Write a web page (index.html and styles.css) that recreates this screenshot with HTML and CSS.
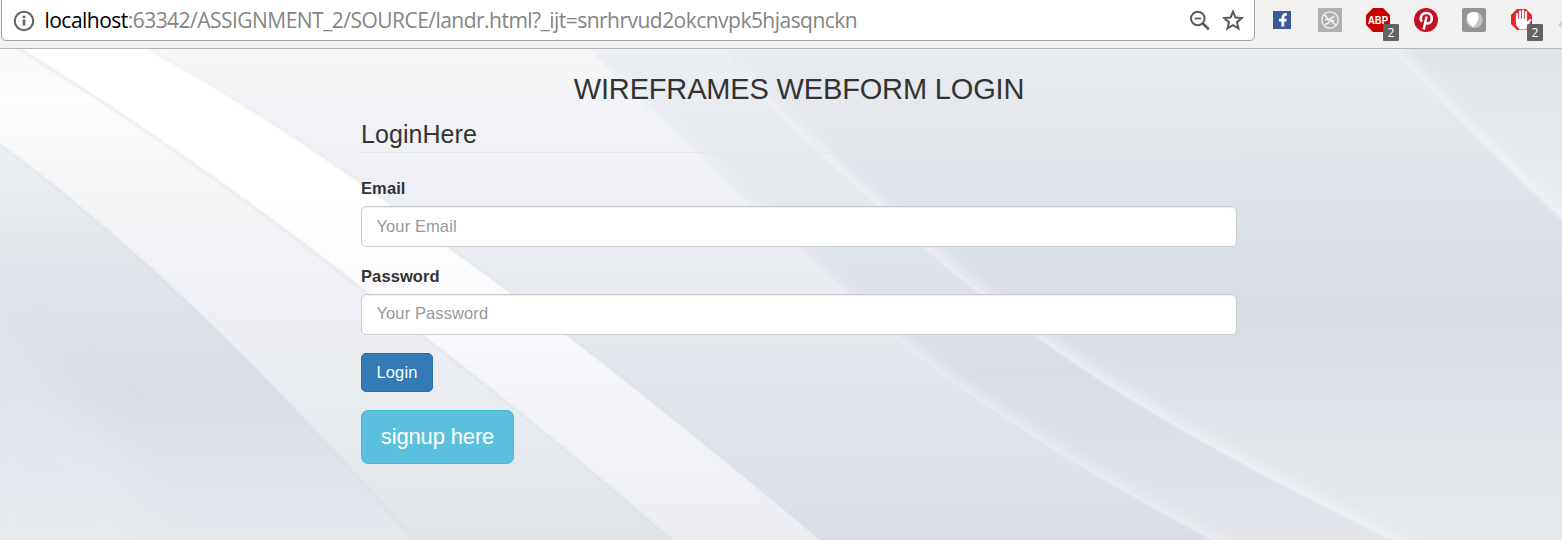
FILE: index.html
```html
<!DOCTYPE html>
<html lang="en">
<head>
<meta charset="utf-8">
<title>Wireframes Webform Login</title>
<link rel="stylesheet" href="styles.css">
</head>
<body>
<header class="toolbar">
  <div class="address">
    <svg class="info" width="22" height="22" viewBox="0 0 22 22"><circle cx="11" cy="11" r="9.2" fill="none" stroke="#5f5f5f" stroke-width="2"/><path d="M11 9.600v6M11 5.800v2.200" stroke="#5f5f5f" stroke-width="2.600"/></svg>
    <span class="url"><span class="host">localhost</span>:63342/ASSIGNMENT_2/SOURCE/landr.html?_ijt=snrhrvud2okcnvpk5hjasqnckn</span>
    <svg class="zoom" width="22" height="22" viewBox="0 0 22 22"><circle cx="8.8" cy="8.5" r="6.8" fill="none" stroke="#5a5a5a" stroke-width="2"/><path d="M13.6 13.3l6.2 6" stroke="#5a5a5a" stroke-width="2.6"/><path d="M5.5 8.5h6.6" stroke="#5a5a5a" stroke-width="1.8"/></svg>
    <svg class="star" width="22" height="22" viewBox="0 0 22 22"><path d="M11 2.600l2.500 5.900 6.400.5-4.900 4.200 1.500 6.200-5.500-3.300-5.500 3.300L7 13.200 2.100 9l6.400-.5z" fill="none" stroke="#5a5a5a" stroke-width="2"/></svg>
  </div>
  <div class="extensions">
    <div class="ext"><svg width="24" height="24" viewBox="0 0 24 24"><path d="M3 3h18v18H3z" fill="#3b5998"/><path d="M12.800 18.500v-8.500q0-4 4-3.600M9 12.200h7.500" fill="none" stroke="#fff" stroke-width="2.800"/></svg></div>
    <div class="ext"><svg width="24" height="24" viewBox="0 0 24 24"><path d="M0 0h24v24H0z" fill="#b0b0b0"/><circle cx="12" cy="12" r="8.200" fill="none" stroke="#f1f1f1" stroke-width="1.300"/><path d="M6.500 7l4 4M13 13l5 4M7 16.500q4-1 5-4.500t4.500-3M7 11.500q5-.5 9 1.500" fill="none" stroke="#f4f4f4" stroke-width="1.500"/></svg></div>
    <div class="ext"><svg width="24" height="24" viewBox="0 0 24 24"><path d="M7 0h10l7 7v10l-7 7H7l-7-7V7z" fill="#c70000"/><text x="12" y="15.700" text-anchor="middle" textLength="20" lengthAdjust="spacingAndGlyphs" class="abp">ABP</text></svg><span class="badge">2</span></div>
    <div class="ext"><svg width="24" height="24" viewBox="0 0 24 24"><circle cx="12" cy="12" r="12" fill="#c40f24"/><path d="M7.900 13.700C5.300 10 7.300 4.900 12.500 4.900c7 0 6.700 10.600 1.200 10.600-1.300 0-2.200-.7-2.400-1.400M12.600 8.500L9.700 21.500" fill="none" stroke="#fff" stroke-width="2.500"/></svg></div>
    <div class="ext"><svg width="24" height="24" viewBox="0 0 24 24"><rect width="24" height="24" rx="2" fill="#949494"/><circle cx="12.500" cy="12" r="8.200" fill="#c4c4c4"/><path d="M7 5q5-2 9 0 2 9-5 14Q5 15 5 9q0-3 2-4z" fill="#fff"/></svg></div>
    <div class="ext"><svg width="24" height="24" viewBox="0 0 24 24"><path d="M7 1h9l6 6v9l-6 6H7l-6-6V7z" fill="#e5252a"/><path d="M7 6v8M10 3.500v10M13 2.500v11M16 4v10" stroke="#fff" stroke-width="2.200" stroke-linecap="round"/><path d="M5.900 11h11.200v3l2.500-3 2 .6-4 7.400-1.900 2.500H9.500L6 17z" fill="#fff"/></svg><span class="badge">2</span></div>
    <div class="ext"><svg width="24" height="24" viewBox="0 0 24 24"><path d="M0 17l6-6v8q-4 1-6-2z" fill="#d4d4d4"/></svg></div>
  </div>
</header>
<main class="page">
  <svg class="backdrop" viewBox="0 49 1562 491" preserveAspectRatio="none" aria-hidden="true">
    <defs>
      <filter id="soft" x="-10%" y="-10%" width="120%" height="120%"><feGaussianBlur stdDeviation="6"/></filter>
      <filter id="wide" x="-40%" y="-40%" width="180%" height="180%"><feGaussianBlur stdDeviation="22"/></filter>
      <filter id="edge" x="-10%" y="-10%" width="120%" height="120%"><feGaussianBlur stdDeviation="0.8"/></filter>
      <linearGradient id="a" gradientUnits="userSpaceOnUse" x1="0" y1="49" x2="0" y2="540"><stop offset=".2" stop-color="#edf0f3"/><stop offset=".4" stop-color="#e2e6ea"/><stop offset=".52" stop-color="#dee2ea"/><stop offset=".7" stop-color="#d9dde6"/><stop offset=".86" stop-color="#dfe3ec"/><stop offset="1" stop-color="#e4e7eb"/></linearGradient>
      <linearGradient id="b" gradientUnits="userSpaceOnUse" x1="0" y1="49" x2="0" y2="540"><stop offset="0" stop-color="#f8f8f8"/><stop offset=".1" stop-color="#fdfdfd"/><stop offset=".31" stop-color="#f4f5f7"/><stop offset=".51" stop-color="#eff0f5"/><stop offset=".72" stop-color="#e8ebf0"/><stop offset="1" stop-color="#e0e3e7"/></linearGradient>
      <linearGradient id="c" gradientUnits="userSpaceOnUse" x1="0" y1="49" x2="0" y2="540"><stop offset=".3" stop-color="#fff"/><stop offset=".58" stop-color="#f9fafc"/><stop offset=".72" stop-color="#f3f4f7"/><stop offset=".88" stop-color="#eff1f5"/><stop offset="1" stop-color="#eaecf2"/></linearGradient>
      <linearGradient id="d" gradientUnits="userSpaceOnUse" x1="0" y1="49" x2="0" y2="540"><stop offset="0" stop-color="#f6f7f8"/><stop offset=".2" stop-color="#f0f1f5"/><stop offset=".32" stop-color="#edeff4"/><stop offset=".4" stop-color="#e9ecf0"/><stop offset=".58" stop-color="#e4e7eb"/><stop offset=".68" stop-color="#e1e4eb"/><stop offset=".88" stop-color="#dde1e9"/><stop offset="1" stop-color="#d9dde6"/></linearGradient>
      <linearGradient id="e" gradientUnits="userSpaceOnUse" x1="0" y1="49" x2="0" y2="540"><stop offset="0" stop-color="#ebeef3"/><stop offset=".2" stop-color="#e6e9ee"/><stop offset=".32" stop-color="#e3e6ea"/><stop offset=".43" stop-color="#dee2ea"/><stop offset=".66" stop-color="#d9dde6"/><stop offset=".82" stop-color="#dce0e9"/><stop offset="1" stop-color="#e2e4e9"/></linearGradient>
      <linearGradient id="f" gradientUnits="userSpaceOnUse" x1="0" y1="49" x2="0" y2="540"><stop offset="0" stop-color="#e8ebf0"/><stop offset=".2" stop-color="#e2e5e9"/><stop offset=".25" stop-color="#dfe4eb"/><stop offset=".45" stop-color="#dadfe7"/><stop offset=".53" stop-color="#d9dce5"/><stop offset=".76" stop-color="#dfe3ec"/><stop offset=".8" stop-color="#e1e5e9"/><stop offset="1" stop-color="#e5e8ec"/></linearGradient>
      <linearGradient id="g" gradientUnits="userSpaceOnUse" x1="0" y1="49" x2="0" y2="220"><stop offset="0" stop-color="#e0e3e7"/><stop offset=".6" stop-color="#e5e9ed"/><stop offset="1" stop-color="#e9edf1"/></linearGradient>
      <path id="c1" d="M-20 131L0 145C48 178 142 258 187 302C260 371 340 456 414 540L430 560"/>
      <path id="c2" d="M-11 29L20 49C130 118 250 200 367 293C475 375 580 460 672 540L695 560"/>
      <path id="c3" d="M118 29L148 49C240 100 340 165 447 247C540 312 690 430 820 540L844 560"/>
      <path id="c4" d="M571 29L590 49C640 103 735 190 795 247C910 355 1000 425 1213 540L1250 560"/>
      <path id="c5" d="M693 29L713 49C780 116 850 180 925 247C1060 365 1190 440 1393 540L1433 560"/>
      <path id="c6" d="M1377 29L1395 49C1450 110 1510 171 1562 218L1584 238"/>
    </defs>
    <rect y="49" width="1562" height="491" fill="url(#g)"/>
    <use href="#c6" class="glow"/>
    <path d="M0 29H1377L1395 49C1450 110 1510 171 1562 218L1584 238V560H0z" fill="url(#f)"/>
    <use href="#c6" class="shine"/>
    <use href="#c5" class="glow"/>
    <path d="M0 29H693L713 49C780 116 850 180 925 247C1060 365 1190 440 1393 540L1433 560H0z" fill="url(#e)"/>
    <use href="#c5" class="shine"/>
    <use href="#c4" class="glow faint"/>
    <path d="M0 29H571L590 49C640 103 735 190 795 247C910 355 1000 425 1213 540L1250 560H0z" fill="url(#d)"/>
    <use href="#c4" class="shine faint"/>
    <path d="M0 29H118L148 49C240 100 340 165 447 247C540 312 690 430 820 540L844 560H0z" fill="url(#c)"/>
    <use href="#c3" class="crease pale"/>
    <path d="M-11 29L20 49C130 118 250 200 367 293C475 375 580 460 672 540L695 560H-20V29z" fill="url(#b)"/>
    <use href="#c2" class="crease"/>
    <path d="M-20 131L0 145C48 178 142 258 187 302C260 371 340 456 414 540L430 560H-20z" fill="url(#a)"/>
    <path d="M-30 320Q70 380 140 480L160 590H-30z" fill="#e8ebef" opacity=".5" filter="url(#wide)"/>
    <use href="#c1" class="crease"/>
  </svg>
  <form class="login">
    <h1>WIREFRAMES WEBFORM LOGIN</h1>
    <h2>LoginHere</h2>
    <label for="email">Email</label>
    <input id="email" type="email" placeholder="Your Email">
    <label for="password">Password</label>
    <input id="password" class="password" type="password" placeholder="Your Password">
    <button class="btn primary" type="button">Login</button>
    <button class="btn info-lg" type="button">signup here</button>
  </form>
</main>
</body>
</html>
```
FILE: styles.css
```css
* { box-sizing: border-box; }
body { margin: 0; height: 540px; overflow: hidden; font-family: "Liberation Sans", Arial, sans-serif; color: #333; }
.toolbar { display: flex; height: 49px; background: #f1f1f1; border-bottom: 1px solid #b5b5b8; overflow: hidden; }
.address { display: flex; flex: none; align-items: center; width: 1254px; height: 46px; margin: -5px 0 0 1px; padding: 5px 10px 0 12px; background: #fff; border: 1px solid #a6a6a6; border-radius: 5px; }
.info { flex: none; margin-left: -1px; }
.url { flex: 1; margin: -1px 0 0 9.5px; font: 21px/30px "Open Sans", "Noto Sans", sans-serif; letter-spacing: -0.53px; color: #858585; white-space: nowrap; }
.host { color: #000; }
.zoom, .star { flex: none; }
.star { margin-left: 11px; margin-top: -1px; }
.extensions { display: flex; flex: none; gap: 24px; padding: 8px 0 0 15px; }
.ext { position: relative; flex: none; width: 24px; height: 24px; }
.ext svg { display: block; }
.abp { font: bold 11.5px "Liberation Sans", sans-serif; fill: #fff; }
.badge { position: absolute; left: 17px; top: 16px; width: 16px; height: 17px; border-radius: 1px; background: #636363; color: #fff; font: 12px/18px "Open Sans", sans-serif; text-align: center; }
.page { position: relative; height: 491px; overflow: hidden; }
.backdrop { position: absolute; inset: 0; width: 100%; height: 100%; }
.glow { fill: none; stroke: #f3f4f8; stroke-width: 14; opacity: .6; filter: url(#soft); }
.shine { fill: none; stroke: #eff1f6; stroke-width: 2.5; opacity: .7; filter: url(#edge); }
.faint { opacity: .45; }
.crease { fill: none; stroke: #d6d7dc; stroke-width: 1.8; opacity: .6; filter: url(#edge); }
.pale { opacity: .3; }
.login { position: relative; display: flex; flex-direction: column; align-items: flex-start; width: 876px; margin-left: 361px; padding-top: 23px; }
h1 { align-self: center; margin: 0; font-size: 29px; line-height: 34px; font-weight: 400; letter-spacing: -0.16px; white-space: nowrap; }
h2 { width: 100%; margin: 12px 0 24px; height: 35px; border-bottom: 1px solid #e5e5e5; font-size: 25px; line-height: 33px; letter-spacing: 0.06px; font-weight: 400; }
label { font-size: 16.5px; line-height: 22px; font-weight: 700; letter-spacing: 0.1px; margin-bottom: 7px; }
input { width: 100%; height: 41px; margin: 0 0 18px; padding: 0 14.5px; border: 1px solid #ccc; border-radius: 5px; background: #fff; box-shadow: inset 0 1px 1px rgba(0,0,0,.075); font: 16.5px "Liberation Sans", Arial, sans-serif; letter-spacing: 0.1px; }
.password { padding-bottom: 2px; }
input::placeholder { color: #999; opacity: 1; }
.btn { color: #fff; font-family: inherit; padding: 0; border: 1px solid; }
.primary { width: 72px; height: 39px; background: #337ab7; border-color: #2e6da4; border-radius: 5px; font-size: 16.5px; letter-spacing: 0.1px; }
.info-lg { width: 153px; height: 54px; margin-top: 18px; background: #5bc0de; border-color: #46b8da; border-radius: 7px; font-size: 22px; letter-spacing: -0.15px; }
```
